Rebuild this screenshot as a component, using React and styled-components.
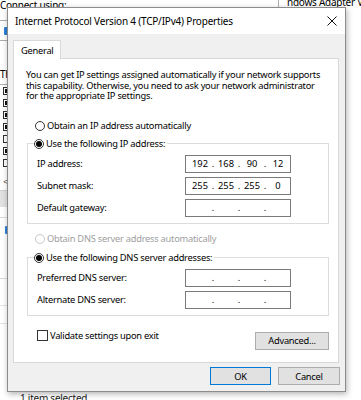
import React from 'react';
import styled, { createGlobalStyle } from 'styled-components';

const GlobalStyle = createGlobalStyle`
  html, body { margin: 0; padding: 0; background: #fff; }
  body {
    font-family: "Noto Sans", "Open Sans", sans-serif;
    font-size: 9.3px;
    letter-spacing: -0.25px;
    color: #000;
  }
  * { box-sizing: border-box; }
`;

const Desktop = styled.div`
  position: relative;
  width: 361px;
  height: 400px;
  overflow: hidden;
  background: #fff;
`;

/* ---------- window behind the dialog ---------- */

const BackWindow = styled.div`
  display: flex;
  flex-direction: column;
  height: 100%;
  color: #000;
`;

const BackTop = styled.div`
  display: flex;
  justify-content: space-between;
  align-items: flex-start;
  height: 10px;
  line-height: 10px;
  font-size: 10px;
`;

const ConnectLabel = styled.span`
  margin-top: 0;
  white-space: nowrap;
`;

const AdapterName = styled.div`
  width: 83px;
  height: 7px;
  padding-left: 8px;
  border-left: 1px solid #adadad;
  white-space: nowrap;
  overflow: hidden;
  line-height: 4px;
`;

const AdapterField = styled.div`
  margin-top: 10px;
  width: 200px;
  height: 21px;
  border: 1px solid #adadad;
  border-left: none;
  display: flex;
  align-items: center;
  padding-left: 4px;
`;

const AdapterIcon = styled.span`
  display: block;
  width: 4px;
  height: 8px;
  background: #2f7fd8;
  border-radius: 1px;
`;

const ItemsLabel = styled.div`
  margin-top: 27px;
  height: 12px;
  line-height: 12px;
  font-size: 10px;
  white-space: nowrap;
`;

const ItemsList = styled.div`
  margin-top: 4px;
  width: 200px;
  padding: 2px 0 0 3px;
  border-top: 1px solid #adadad;
  display: flex;
  flex-direction: column;
  gap: 4px;
`;

const BackCheck = styled.span`
  width: 8px;
  height: 8px;
  border: 1px solid #333;
  background: #fff;
  position: relative;
  &::after {
    content: '';
    display: ${p => (p.$checked ? 'block' : 'none')};
    position: absolute;
    left: 1px;
    top: 1px;
    width: 2px;
    height: 4px;
    background: #111;
  }
`;

const ScrollArrow = styled.div`
  margin-top: 10px;
  padding-left: 3px;
  font-size: 9px;
  color: #555;
  height: 10px;
  line-height: 10px;
`;

const ButtonStrip = styled.div`
  margin-top: 3px;
  width: 200px;
  height: 17px;
  background: #e1e1e1;
  border-top: 1px solid #cfcfcf;
`;

const DescBox = styled.div`
  margin-top: 10px;
  width: 200px;
  height: 62px;
  border-top: 1px solid #dcdcdc;
  border-bottom: 1px solid #dcdcdc;
  padding: 8px 0 0 5px;
`;

const BackLine = styled.div`
  margin-top: ${p => p.$gap}px;
  width: 200px;
  border-top: 1px solid #e3e3e3;
`;

const StatusText = styled.div`
  margin-top: auto;
  margin-bottom: -5px;
  padding-left: 20px;
  font-size: 10px;
  color: #222;
  white-space: nowrap;
`;

/* ---------- dialog ---------- */

const Dialog = styled.div`
  position: absolute;
  left: 7px;
  top: 7px;
  width: 339px;
  height: 385px;
  border: 1px solid #8c8c8c;
  background: #f0f0f0;
  box-shadow: 1px 2px 6px rgba(0, 0, 0, 0.3);
  display: flex;
  flex-direction: column;
  overflow: hidden;
`;

const TitleBar = styled.div`
  height: 26px;
  flex: none;
  background: #fff;
  display: flex;
  align-items: center;
  justify-content: space-between;
  padding: 0 8px 1px 7px;
  font-size: 10px;
  letter-spacing: -0.2px;
`;

const Body = styled.div`
  flex: 1;
  min-width: 0;
  display: flex;
  flex-direction: column;
  padding: 6px 6px 6px 5px;
`;

const Tabs = styled.div`
  display: flex;
  margin-bottom: -1px;
  position: relative;
  z-index: 1;
`;

const Tab = styled.div`
  height: 19px;
  padding: 0 6px 0 7px;
  display: flex;
  align-items: center;
  background: #fff;
  border: 1px solid #d9d9d9;
  border-bottom: none;
`;

const Panel = styled.div`
  min-width: 0;
  background: #fff;
  border: 1px solid #d9d9d9;
  padding: 11px 9px 12px 12px;
  display: flex;
  flex-direction: column;
`;

const Intro = styled.p`
  margin: 0;
  line-height: 10.5px;
  white-space: nowrap;
`;

const RadioLine = styled.label`
  display: flex;
  align-items: center;
  gap: 2px;
  height: 12px;
  margin-top: ${p => p.$gap || 0}px;
  padding-left: ${p => p.$indent || 0}px;
  color: ${p => (p.$disabled ? '#a0a0a0' : '#000')};
  white-space: nowrap;
`;

const RadioDot = styled.span`
  width: 10px;
  height: 10px;
  flex: none;
  border-radius: 50%;
  border: 1px solid ${p => (p.$disabled ? '#c8c8c8' : '#333')};
  background: #fff;
  display: flex;
  align-items: center;
  justify-content: center;
  &::after {
    content: '';
    display: ${p => (p.$checked ? 'block' : 'none')};
    width: 6px;
    height: 6px;
    border-radius: 50%;
    background: #000;
  }
`;

const Group = styled.fieldset`
  margin: ${p => p.$gap || 0}px 0 0 1px;
  padding: 5px 9px 6px;
  border: 1px solid #dcdcdc;
  display: flex;
  flex-direction: column;
  gap: 4px;
  min-width: 0;
`;

const Legend = styled.legend`
  padding: 0 2px 0 0;
  margin-left: -3px;
  display: flex;
  align-items: center;
  gap: 2px;
  line-height: 12px;
`;

const FieldRow = styled.div`
  display: flex;
  align-items: center;
  justify-content: space-between;
  height: 18px;
  padding-right: 28px;
`;

const IpBox = styled.div`
  width: 106px;
  height: 18px;
  border: 1px solid #7a7a7a;
  background: #fff;
  display: flex;
  align-items: center;
  padding-left: 3px;
  letter-spacing: 0;
`;

const Octet = styled.span`
  width: 22px;
  text-align: center;
`;

const Dot = styled.span`
  width: 4px;
  text-align: center;
`;

const OptionsRow = styled.div`
  display: flex;
  justify-content: space-between;
  align-items: flex-start;
  margin-top: 14px;
  padding-left: 11px;
`;

const CheckLine = styled.label`
  display: flex;
  align-items: center;
  gap: 2px;
  height: 12px;
`;

const CheckBox = styled.span`
  width: 11px;
  height: 11px;
  border: 1px solid #333;
  background: #fff;
`;

const Button = styled.button`
  font: inherit;
  letter-spacing: inherit;
  color: #000;
  height: 18px;
  width: ${p => p.$w}px;
  margin-top: ${p => p.$top || 0}px;
  padding: 0;
  background: #e1e1e1;
  border: 1px solid ${p => (p.$primary ? '#0078d7' : '#adadad')};
`;

const Footer = styled.div`
  display: flex;
  justify-content: flex-end;
  gap: 7px;
  margin-top: auto;
  margin-right: -1px;
`;

const CloseIcon = () => (
  <svg width="10" height="10" viewBox="0 0 10 10">
    <path d="M0.5 0.5 L9.5 9.5 M9.5 0.5 L0.5 9.5" stroke="#111" strokeWidth="1" fill="none" />
  </svg>
);

const IpField = ({ value }) => {
  const parts = value ? value.split('.') : ['', '', '', ''];
  return (
    <IpBox>
      {parts.map((p, i) => (
        <React.Fragment key={i}>
          {i > 0 && <Dot>.</Dot>}
          <Octet>{p}</Octet>
        </React.Fragment>
      ))}
    </IpBox>
  );
};

export default function App() {
  return (
    <Desktop>
      <GlobalStyle />
      <BackWindow>
        <BackTop>
          <ConnectLabel>Connect using:</ConnectLabel>
          <AdapterName>ndows Adapter V</AdapterName>
        </BackTop>
        <AdapterField>
          <AdapterIcon />
        </AdapterField>
        <ItemsLabel>This connection uses the following items:</ItemsLabel>
        <ItemsList>
          {[true, true, true, true, false, true, false].map((c, i) => (
            <BackCheck key={i} $checked={c} />
          ))}
        </ItemsList>
        <ScrollArrow>&lt;</ScrollArrow>
        <ButtonStrip />
        <DescBox>
          <AdapterIcon />
        </DescBox>
        <BackLine $gap={26} />
        <BackLine $gap={17} />
        <StatusText>1 item selected</StatusText>
      </BackWindow>

      <Dialog>
        <TitleBar>
          <span>Internet Protocol Version 4 (TCP/IPv4) Properties</span>
          <CloseIcon />
        </TitleBar>
        <Body>
          <Tabs>
            <Tab>General</Tab>
          </Tabs>
          <Panel>
            <Intro>
              You can get IP settings assigned automatically if your network supports<br />
              this capability. Otherwise, you need to ask your network administrator<br />
              for the appropriate IP settings.
            </Intro>

            <RadioLine $gap={18} $indent={9}>
              <RadioDot />
              Obtain an IP address automatically
            </RadioLine>

            <Group $gap={6}>
              <Legend>
                <RadioDot $checked />
                Use the following IP address:
              </Legend>
              <FieldRow>
                <span>IP address:</span>
                <IpField value="192.168.90.12" />
              </FieldRow>
              <FieldRow>
                <span>Subnet mask:</span>
                <IpField value="255.255.255.0" />
              </FieldRow>
              <FieldRow>
                <span>Default gateway:</span>
                <IpField />
              </FieldRow>
            </Group>

            <RadioLine $gap={9} $indent={9} $disabled>
              <RadioDot $disabled />
              Obtain DNS server address automatically
            </RadioLine>

            <Group $gap={7}>
              <Legend>
                <RadioDot $checked />
                Use the following DNS server addresses:
              </Legend>
              <FieldRow>
                <span>Preferred DNS server:</span>
                <IpField />
              </FieldRow>
              <FieldRow>
                <span>Alternate DNS server:</span>
                <IpField />
              </FieldRow>
            </Group>

            <OptionsRow>
              <CheckLine>
                <CheckBox />
                Validate settings upon exit
              </CheckLine>
              <Button $w={74} $top={2}>Advanced...</Button>
            </OptionsRow>
          </Panel>
          <Footer>
            <Button $w={61} $primary>OK</Button>
            <Button $w={62}>Cancel</Button>
          </Footer>
        </Body>
      </Dialog>
    </Desktop>
  );
}
